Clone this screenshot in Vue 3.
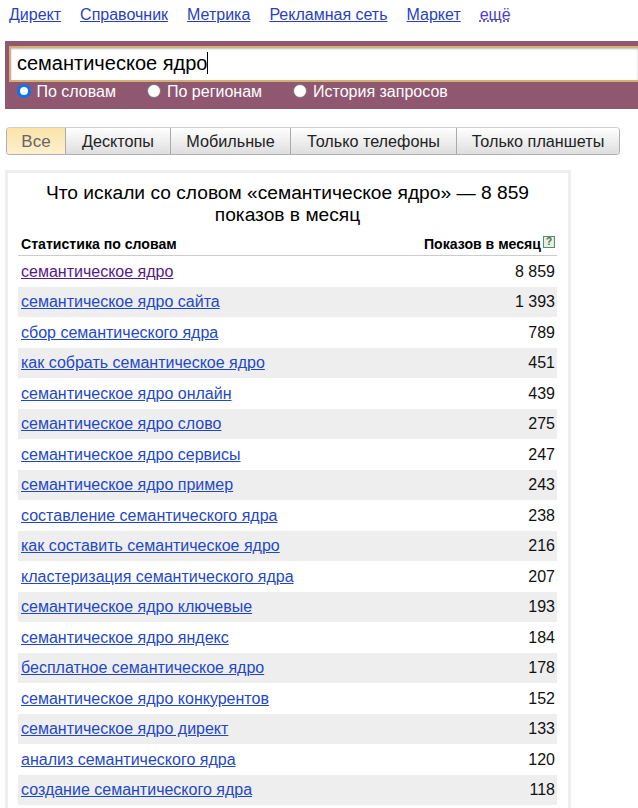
<script setup>
const links = ['Директ', 'Справочник', 'Метрика', 'Рекламная сеть', 'Маркет']
const radios = [
  { label: 'По словам', checked: true },
  { label: 'По регионам', checked: false },
  { label: 'История запросов', checked: false },
]
const tabs = [
  { label: 'Все', width: 58 },
  { label: 'Десктопы', width: 105 },
  { label: 'Мобильные', width: 120 },
  { label: 'Только телефоны', width: 166 },
  { label: 'Только планшеты', width: 163 },
]
const rows = [
  ['семантическое ядро', '8 859'],
  ['семантическое ядро сайта', '1 393'],
  ['сбор семантического ядра', '789'],
  ['как собрать семантическое ядро', '451'],
  ['семантическое ядро онлайн', '439'],
  ['семантическое ядро слово', '275'],
  ['семантическое ядро сервисы', '247'],
  ['семантическое ядро пример', '243'],
  ['составление семантического ядра', '238'],
  ['как составить семантическое ядро', '216'],
  ['кластеризация семантического ядра', '207'],
  ['семантическое ядро ключевые', '193'],
  ['семантическое ядро яндекс', '184'],
  ['бесплатное семантическое ядро', '178'],
  ['семантическое ядро конкурентов', '152'],
  ['семантическое ядро директ', '133'],
  ['анализ семантического ядра', '120'],
  ['создание семантического ядра', '118'],
]
</script>

<template>
  <div class="page">
    <nav class="top-nav">
      <a v-for="link in links" :key="link" href="#" class="nav-link">{{ link }}</a>
      <a href="#" class="nav-link nav-more">ещё</a>
    </nav>

    <div class="search-band">
      <div class="search-input">семантическое ядро<span class="caret"></span></div>
      <div class="radios">
        <label v-for="r in radios" :key="r.label" class="radio">
          <span class="dot" :class="{ checked: r.checked }"></span>{{ r.label }}
        </label>
      </div>
    </div>

    <div class="tabs">
      <div
        v-for="(t, i) in tabs"
        :key="t.label"
        class="tab"
        :class="{ active: i === 0 }"
        :style="{ width: t.width + 'px' }"
      >{{ t.label }}</div>
    </div>

    <section class="card">
      <h2 class="card-title">Что искали со словом «семантическое ядро» — 8 859 показов в месяц</h2>
      <div class="table-head">
        <span>Статистика по словам</span>
        <span class="head-right">Показов в месяц<span class="help">?</span></span>
      </div>
      <div v-for="(row, i) in rows" :key="row[0]" class="row" :class="{ odd: i % 2 === 1 }">
        <a href="#" class="row-link" :class="{ visited: i === 0 }">{{ row[0] }}</a>
        <span class="row-num">{{ row[1] }}</span>
      </div>
    </section>
  </div>
</template>

<style>
html, body {
  margin: 0;
  background: #fff;
  overflow: hidden;
}
</style>

<style scoped>
.page {
  width: 638px;
  height: 808px;
  overflow: hidden;
  font-family: "Liberation Sans", Arial, sans-serif;
  color: #000;
}

.top-nav {
  display: flex;
  gap: 19px;
  height: 41px;
  padding: 6px 0 0 9px;
  box-sizing: border-box;
  font-size: 16px;
  line-height: 18px;
}

.nav-link {
  color: #2a3fc0;
  text-decoration: underline;
}

.nav-more {
  color: #4a3fd0;
  text-decoration: underline dotted;
}

.search-band {
  margin-left: 5px;
  height: 68px;
  padding-top: 5px;
  box-sizing: border-box;
  background: #8f5770;
}

.search-input {
  height: 36px;
  margin-left: 4px;
  padding: 0 0 2px 6px;
  box-sizing: border-box;
  border: 2px solid #d4ae72;
  border-right: none;
  box-shadow: inset 0 1px 2px #bbb;
  background: #fff;
  font-size: 20px;
  line-height: 30px;
  display: flex;
  align-items: center;
}

.caret {
  width: 1px;
  height: 22px;
  background: #000;
}

.radios {
  display: flex;
  padding: 1px 0 0 11.5px;
  font-size: 16px;
  line-height: 18px;
  color: #fff;
}

.radio {
  display: flex;
  align-items: center;
  gap: 6px;
  margin-right: 31px;
}

.dot {
  width: 14px;
  height: 14px;
  margin-top: -3px;
  border-radius: 50%;
  background: #fff;
  border: 1px solid #777;
  box-sizing: border-box;
}

.dot.checked {
  border: 3px solid #0b73ea;
}

.tabs {
  display: flex;
  width: 614px;
  height: 28px;
  margin: 18px 0 0 6px;
  border: 1px solid #b0b0b0;
  border-top-color: #d0d0d0;
  border-radius: 4px;
  box-sizing: border-box;
  overflow: hidden;
}

.tab {
  flex: 0 0 auto;
  box-sizing: border-box;
  font-size: 16.2px;
  line-height: 26px;
  text-align: center;
  color: #222;
  background: linear-gradient(#fff, #dedede);
  border-left: 1px solid #aaa;
}

.tab.active {
  border-left: none;
  color: #666;
  font-size: 17px;
  line-height: 28px;
  background: linear-gradient(#fbe3a8, #fdf0cf);
}

.card {
  width: 566px;
  margin: 15px 0 0 5px;
  padding: 9px 11px 20px 10px;
  box-sizing: border-box;
  border: 3px solid #eee;
}

.card-title {
  margin: 0 auto;
  width: 510px;
  font-size: 19.2px;
  font-weight: 400;
  line-height: 22px;
  text-align: center;
}

.table-head {
  display: flex;
  justify-content: space-between;
  align-items: flex-end;
  height: 30px;
  padding: 0 2px 3px 3px;
  border-bottom: 1px solid #ccc;
  box-sizing: border-box;
  font-size: 14.1px;
  line-height: 16px;
  font-weight: 700;
}

.head-right {
  display: flex;
  align-items: flex-start;
  gap: 2px;
}

.help {
  width: 12px;
  height: 12px;
  box-sizing: border-box;
  border: 1px solid #4f9160;
  background: #e6eee0;
  color: #4d6a52;
  font-size: 10px;
  line-height: 10px;
  text-align: center;
}

.row {
  display: flex;
  justify-content: space-between;
  align-items: center;
  height: 30.5px;
  padding: 1px 2px 0 3px;
  box-sizing: border-box;
  font-size: 16px;
}

.row.odd {
  background: #eee;
}

.row-link {
  color: #1f48c8;
  text-decoration: underline;
}

.row-link.visited {
  color: #551a8b;
}

.row-num {
  color: #111;
}
</style>
